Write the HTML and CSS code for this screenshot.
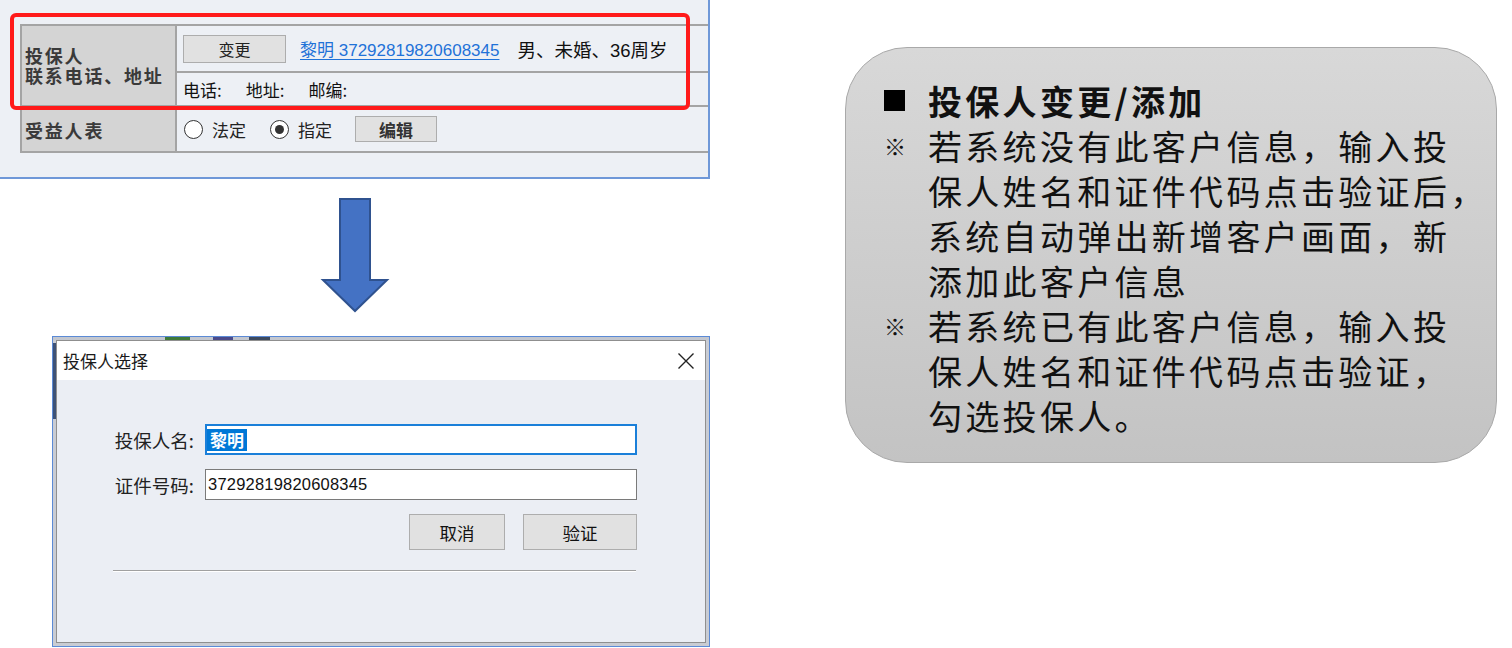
FILE: index.html
```html
<!DOCTYPE html>
<html lang="zh-CN">
<head>
<meta charset="utf-8">
<title>投保人变更/添加</title>
<link rel="stylesheet" href="styles.css">
</head>
<body>
<div class="page">
  <div class="left">
    <section class="panel">
      <div class="tbl">
        <div class="lbl lbl-tall"><span class="lline">投保人</span><span class="lline">联系电话、地址</span></div>
        <div class="cell row-a">
          <span class="btn btn-change">变更</span>
          <a class="link" href="#">黎明 37292819820608345</a>
          <span class="info">男、未婚、36周岁</span>
        </div>
        <div class="cell row-b">
          <span>电话:</span><span>地址:</span><span>邮编:</span>
        </div>
        <div class="lbl lbl-row">受益人表</div>
        <div class="cell row-c">
          <span class="radio"></span><span class="rtext">法定</span>
          <span class="radio checked"></span><span class="rtext">指定</span>
          <span class="btn btn-edit">编辑</span>
        </div>
      </div>
      <div class="highlight"></div>
    </section>

    <div class="arrow-wrap">
      <svg class="arrow" width="70" height="118" viewBox="0 0 70 118">
        <polygon points="20,3 50,3 50,84 67,84 35,115 3,84 20,84" fill="#4472c4" stroke="#2f528f" stroke-width="2" stroke-linejoin="miter"/>
      </svg>
    </div>

    <section class="dialog">
      <div class="window">
        <div class="titlebar">
          <span class="title">投保人选择</span>
          <svg class="close" width="18" height="18" viewBox="0 0 18 18">
            <path d="M1.5 1.5 L16.5 16.5 M16.5 1.5 L1.5 16.5" stroke="#222" stroke-width="1.4" fill="none"/>
          </svg>
        </div>
        <div class="content">
          <div class="form">
            <label class="flabel">投保人名:</label>
            <div class="input focused"><span class="sel">黎明</span></div>
            <label class="flabel">证件号码:</label>
            <div class="input"><span class="val">37292819820608345</span></div>
          </div>
          <div class="actions">
            <span class="dbtn btn-cancel">取消</span>
            <span class="dbtn btn-verify">验证</span>
          </div>
          <div class="sep"></div>
        </div>
      </div>
    </section>
  </div>

  <aside class="note">
    <div class="note-row title-row">
      <span class="mark"><span class="square"></span></span>
      <span class="ntext bold">投保人变更/添加</span>
    </div>
    <div class="note-row">
      <span class="mark ref">※</span>
      <span class="ntext">若系统没有此客户信息，输入投<br>保人姓名和证件代码点击验证后，<br>系统自动弹出新增客户画面，新<br>添加此客户信息</span>
    </div>
    <div class="note-row">
      <span class="mark ref">※</span>
      <span class="ntext">若系统已有此客户信息，输入投<br>保人姓名和证件代码点击验证，<br>勾选投保人。</span>
    </div>
  </aside>
</div>
</body>
</html>
```

FILE: styles.css
```css
* { box-sizing: border-box; }

html, body {
  margin: 0;
  padding: 0;
  background: #ffffff;
}

body {
  width: 1512px;
  height: 648px;
  overflow: hidden;
  font-family: "Noto Sans CJK SC", sans-serif;
  color: #111;
}

.page {
  display: flex;
  align-items: flex-start;
}

.left {
  width: 710px;
  flex: none;
  display: flex;
  flex-direction: column;
}

/* ---------- top screenshot panel ---------- */
.panel {
  position: relative;
  width: 710px;
  height: 179px;
  background: #edf0f5;
  border-right: 2px solid #6f98d8;
  border-bottom: 2px solid #6f98d8;
  padding: 24px 0 0 20px;
}

.tbl {
  display: grid;
  grid-template-columns: 155px 1fr;
  grid-template-rows: 47px 34px 46px;
  border-top: 2px solid #a4a4a4;
  border-left: 2px solid #a4a4a4;
}

.lbl {
  background: #d4d4d4;
  border-right: 2px solid #a4a4a4;
  border-bottom: 2px solid #a4a4a4;
  font-weight: 700;
  font-size: 18px;
  letter-spacing: 1.8px;
  color: #3a3a3a;
  padding-left: 3px;
  display: flex;
  align-items: center;
}

.lbl-tall {
  grid-row: 1 / span 2;
  flex-direction: column;
  align-items: flex-start;
  justify-content: center;
  padding-bottom: 2px;
}

.lline {
  display: block;
  line-height: 20px;
  height: 20px;
}

.lbl-row {
  padding-top: 2px;
}

.cell {
  border-bottom: 2px solid #a4a4a4;
  display: flex;
  align-items: center;
  padding-left: 6px;
  font-size: 16px;
  color: #111;
}

.btn {
  display: inline-flex;
  align-items: center;
  justify-content: center;
  background: #e1e1e1;
  border: 1px solid #adadad;
  font-size: 16px;
  color: #222;
}

.btn-change {
  width: 103px;
  height: 28px;
  margin-top: 1px;
}

.link {
  margin-left: 14px;
  font-family: "Liberation Sans", "Noto Sans CJK SC", sans-serif;
  font-size: 17px;
  color: #1f72d8;
  text-decoration: underline;
  text-underline-offset: 3px;
}

.info {
  margin-left: 18px;
  font-family: "Liberation Sans", "Noto Sans CJK SC", sans-serif;
  font-size: 18.5px;
  color: #111;
}

.row-b {
  gap: 24px;
  font-size: 17px;
}

.row-c {
  padding-left: 7px;
  font-size: 17px;
}

.radio {
  width: 19px;
  height: 19px;
  border-radius: 50%;
  border: 1.5px solid #333;
  background: #fff;
  display: inline-flex;
  align-items: center;
  justify-content: center;
  flex: none;
}

.radio.checked::after {
  content: "";
  width: 9px;
  height: 9px;
  border-radius: 50%;
  background: #333;
}

.rtext {
  margin-left: 9px;
  margin-right: 24px;
  color: #222;
}

.btn-edit {
  width: 82px;
  height: 26px;
  font-weight: 700;
  font-size: 17px;
  color: #333;
  margin-left: -1px;
}

.highlight {
  position: absolute;
  left: 10px;
  top: 13px;
  width: 680px;
  height: 97px;
  border: 4px solid #ff1a1a;
  border-radius: 6px;
  pointer-events: none;
}

/* ---------- arrow ---------- */
.arrow-wrap {
  height: 157px;
  padding: 17px 0 0 320px;
}

.arrow { display: block; }

/* ---------- dialog ---------- */
.dialog {
  margin-left: 52px;
  width: 658px;
  height: 311px;
  border: 1px solid #5b8ad6;
  padding: 3px;
  background:
    linear-gradient(to right, #c3c7cf 0 112px, #3f7a3a 112px 137px, #c3c7cf 137px 160px, #4b4b8a 160px 180px, #c3c7cf 180px 196px, #3e4a5e 196px 217px, #c3c7cf 217px) top left / 100% 3px no-repeat,
    linear-gradient(to bottom, transparent 0 6px, #3d5277 6px 82px, transparent 82px) top left / 3px 100% no-repeat,
    #c9ccd3;
}

.window {
  height: 100%;
  border: 1px solid #8f8f8f;
  display: flex;
  flex-direction: column;
}

.titlebar {
  height: 39px;
  background: #ffffff;
  display: flex;
  align-items: center;
  justify-content: space-between;
  padding: 0 10px 0 6px;
  flex: none;
}

.title {
  font-size: 17px;
  color: #1a1a1a;
}

.close { display: block; }

.content {
  flex: 1;
  background: #ebeef4;
  padding: 44px 0 0 56px;
}

.form {
  display: grid;
  grid-template-columns: 81px 432px;
  grid-template-rows: 31px 31px;
  column-gap: 11px;
  row-gap: 14px;
  align-items: center;
}

.flabel {
  font-size: 18.5px;
  color: #222;
  text-align: right;
  white-space: nowrap;
}

.input {
  height: 31px;
  background: #fff;
  border: 1px solid #7a7a7a;
  display: flex;
  align-items: center;
  padding-left: 2px;
}

.input.focused {
  border: 2px solid #1a7fd9;
  padding-left: 0;
}

.sel {
  background: #0078d7;
  color: #fff;
  font-size: 17px;
  font-weight: 700;
  line-height: 22px;
  padding: 0 3px;
}

.val {
  font-family: "Liberation Sans", sans-serif;
  font-size: 16.5px;
  color: #111;
  letter-spacing: 0.2px;
}

.actions {
  display: flex;
  gap: 18px;
  width: 524px;
  justify-content: flex-end;
  margin-top: 14px;
}

.dbtn {
  height: 36px;
  display: inline-flex;
  align-items: center;
  justify-content: center;
  background: #e1e1e1;
  border: 1px solid #adadad;
  font-size: 17.5px;
  color: #111;
}

.btn-cancel { width: 96px; }
.btn-verify { width: 114px; }

.sep {
  width: 523px;
  margin-top: 20px;
  border-top: 1px solid #a0a0a0;
  border-bottom: 1px solid #ffffff;
}

/* ---------- note box ---------- */
.note {
  margin: 47px 0 0 135px;
  width: 652px;
  height: 416px;
  border-radius: 62px;
  border: 1px solid #a9a9a9;
  background: linear-gradient(180deg, #d8d8d8 0%, #c3c3c3 100%);
  padding: 30px 0 0 38px;
  font-size: 34px;
  line-height: 45px;
  color: #111;
}

.note-row {
  display: flex;
  align-items: flex-start;
}

.mark {
  width: 44px;
  flex: none;
  height: 45px;
  display: flex;
  align-items: center;
}

.square {
  width: 21px;
  height: 21px;
  background: #000;
}

.ref {
  font-size: 22px;
  color: #111;
}

.ntext {
  letter-spacing: 3.3px;
  white-space: nowrap;
}

.bold { font-weight: 700; }
```
